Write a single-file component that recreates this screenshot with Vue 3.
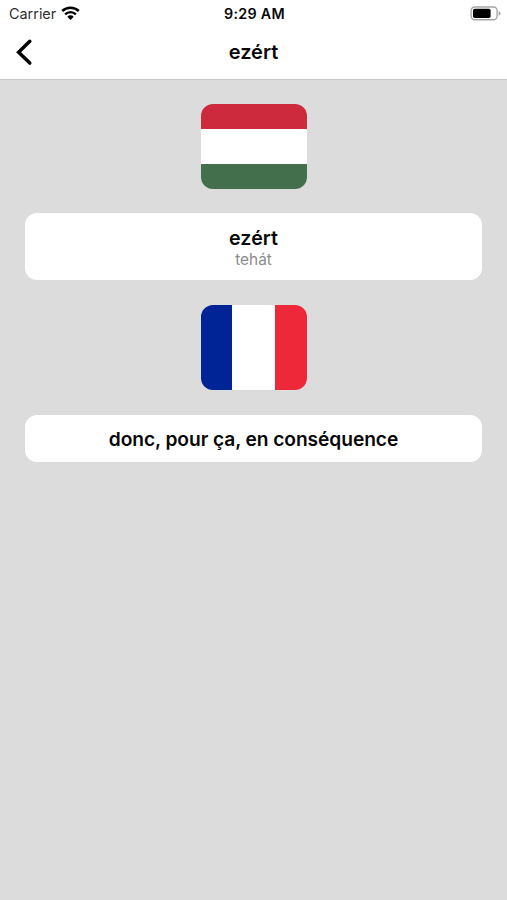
<script setup>
const source = { word: 'ezért', note: 'tehát' }
const translation = 'donc, pour ça, en conséquence'
</script>

<template>
  <div class="screen">
    <header class="header">
      <div class="status">
        <div class="carrier">
          <span class="carrier-name">Carrier</span>
          <svg class="wifi" width="19" height="14" viewBox="0 0 19 14">
            <path d="M1.2 5A12 12 0 0 1 17.8 5" fill="none" stroke="#000" stroke-width="2.5" />
            <path d="M4.1 8.3A7.8 7.8 0 0 1 14.9 8.3" fill="none" stroke="#000" stroke-width="2.4" />
            <path d="M6.3 10.7A4.5 4.5 0 0 1 12.7 10.7L9.5 13.9Z" fill="#000" />
          </svg>
        </div>
        <span class="time">9:29 AM</span>
        <svg class="battery" width="31" height="16" viewBox="0 0 31 16">
          <rect x="1.1" y="1" width="26" height="12.8" rx="3.8" fill="#fff" stroke="#a6a6a6" stroke-width="1.4" />
          <rect x="3" y="2.8" width="17.6" height="9.2" rx="1.8" fill="#000" />
          <path d="M28.6 5Q30.6 5.8 30.6 7.4T28.6 9.8Z" fill="#a6a6a6" />
        </svg>
      </div>
      <div class="nav">
        <svg class="back" width="20" height="30" viewBox="0 0 20 30">
          <path d="M15.8 4.3L4.6 15.2L15.8 26.1" fill="none" stroke="#000" stroke-width="3.5" stroke-linecap="round" stroke-linejoin="miter" />
        </svg>
        <h1 class="title">{{ source.word }}</h1>
      </div>
    </header>
    <main class="content">
      <div class="flag hungarian"><i /><i /><i /></div>
      <section class="card source">
        <strong class="word">{{ source.word }}</strong>
        <span class="note">{{ source.note }}</span>
      </section>
      <div class="flag french"><i /><i /><i /></div>
      <section class="card target">
        <strong class="phrase">{{ translation }}</strong>
      </section>
    </main>
  </div>
</template>

<style>
body { background: #dcdcdc; }
</style>

<style scoped>
.screen {
  height: 900px;
  overflow: hidden;
  background: #dcdcdc;
  color: #080808;
  font-family: Inter, "Liberation Sans", sans-serif;
}
.header {
  box-sizing: border-box;
  height: 80px;
  background: #fff;
  border-bottom: 1px solid #c9c9c9;
}
.status {
  display: grid;
  grid-template-columns: 1fr auto 1fr;
  align-items: center;
  height: 27px;
  padding: 0 7px 0 9px;
}
.carrier { display: flex; align-items: center; gap: 5px; }
.carrier-name { font-size: 14.4px; line-height: 18px; color: #303030; }
.wifi { margin-top: -2px; }
.time { font-size: 14.3px; line-height: 18px; font-weight: 600; letter-spacing: 0.3px; }
.battery { justify-self: end; margin-right: -1px; }
.nav {
  display: grid;
  grid-template-columns: 40px 1fr 40px;
  align-items: center;
  height: 50px;
  padding: 0 14px;
}
.title { margin: 0; grid-column: 2; text-align: center; font-size: 20px; line-height: 26px; font-weight: 600; }
.content {
  display: flex;
  flex-direction: column;
  align-items: center;
  padding: 24px 25px 0;
}
.flag {
  display: grid;
  width: 106px;
  height: 85px;
  border-radius: 12px;
  overflow: hidden;
}
.hungarian { grid-template-rows: 25px 35px 1fr; }
.hungarian i:nth-child(1) { background: #cd2a3e; }
.hungarian i:nth-child(2) { background: #fff; }
.hungarian i:nth-child(3) { background: #436f4d; }
.french { grid-template-columns: 31.5px 43px 1fr; }
.french i:nth-child(1) { background: #002395; }
.french i:nth-child(2) { background: #fff; }
.french i:nth-child(3) { background: #ed2939; }
.card {
  box-sizing: border-box;
  width: 457.5px;
  display: flex;
  flex-direction: column;
  align-items: center;
  justify-content: center;
  border-radius: 12px;
  background: #fff;
}
.source { height: 67px; margin: 24px 0 25px; padding-top: 2px; }
.target { height: 47px; margin-top: 25px; padding-top: 1px; }
.word, .phrase { line-height: 24px; font-weight: 600; }
.word { font-size: 19.7px; }
.phrase { font-size: 19.2px; letter-spacing: -0.08px; }
.note { font-size: 15.4px; line-height: 19px; color: #8b8b8b; }
</style>
